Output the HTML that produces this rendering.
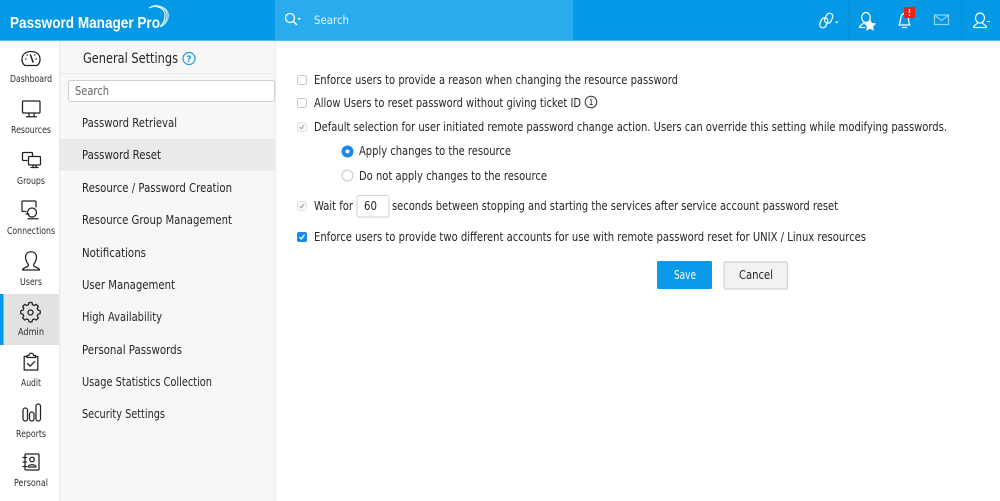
<!DOCTYPE html>
<html><head><meta charset="utf-8"><style>
html,body{margin:0;padding:0;background:#fff}
svg{display:block}
text{font-family:"DejaVu Sans","Liberation Sans",sans-serif;fill:#262626}
.m{font-size:12px}
.s{font-size:9.8px;fill:#2e2e2e}
.c{font-size:12px}
.i{fill:none;stroke:#222;stroke-width:1.25;stroke-linejoin:round;stroke-linecap:round}
.w{fill:none;stroke:#fff;stroke-width:1.2;stroke-linecap:round;stroke-linejoin:round}
</style></head><body>
<svg width="1000" height="501" viewBox="0 0 1000 501" xmlns="http://www.w3.org/2000/svg">
<rect width="1000" height="501" fill="#fff"/>
<rect x="59" y="40" width="216" height="461" fill="#f7f7f7"/>
<rect x="59" y="40" width="1" height="461" fill="#eaeaea"/>
<rect x="275" y="40" width="1" height="461" fill="#ececec"/>
<rect x="60" y="73" width="215" height="1.2" fill="#ececec"/>
<rect width="1000" height="40" fill="#0498e6"/>
<rect y="40" width="1000" height="1" fill="#56bdf0"/>
<rect x="275" width="298" height="40" fill="#2aabee"/>

<!-- Logo -->
<text x="10" y="28" font-size="15.500" font-weight="700" style="fill:#fff;font-family:'Liberation Sans',sans-serif" textLength="150" lengthAdjust="spacingAndGlyphs">Password Manager Pro</text>
<path d="M149 8C156 4.500 164 8 165 14C165.500 19 163 24 160 26.500" fill="none" stroke="#fff" stroke-width="1"/>
<path d="M151 6.500C158 4.500 166 8 167 14C167.500 19 164.500 24 161 27" fill="none" stroke="#e6f6ff" stroke-width="1"/>
<path d="M154 5.500C161 5 168 9 168.500 15C168.500 19 166 23 163 25.500" fill="none" stroke="#bfe7fb" stroke-width=".9"/>

<!-- Search -->
<circle cx="290" cy="18" r="4.500" fill="none" stroke="#fff" stroke-width="1.300"/>
<path d="M293.500 21.500L297 25" stroke="#fff" stroke-width="1.500"/>
<path d="M297.500 18h3.500l-1.750 2z" fill="#fff"/>
<text x="314" y="24" font-size="11.500" style="fill:#e4f5fe" textLength="35" lengthAdjust="spacingAndGlyphs">Search</text>

<!-- Header right icons -->
<g class="w">
<rect x="820.500" y="17.500" width="6.500" height="10.500" rx="3.250" transform="rotate(25 823.750 22.750)"/>
<rect x="825.500" y="13" width="6.500" height="10.500" rx="3.250" transform="rotate(25 828.750 18.250)"/>
<ellipse cx="866" cy="17.500" rx="4.300" ry="5"/>
<path d="M859.500 27.500c0-3 3.500-2.500 4.500-5M859.500 27.500h5M869 22.500l1 .7"/>
<path d="M899 25c2-2 .5-11.500 5.500-11.500S908 23 910 25zM902.500 27.500h4"/>
<ellipse cx="980" cy="18" rx="4.500" ry="5"/>
<path d="M973.500 27.500c0-3 4-3 4.500-5M986.500 27.500c0-3-4-3-4.500-5M973.500 27.500h13"/>
</g>
<path d="M835 21.500h3.500l-1.750 2z" fill="#fff"/>
<path d="M987 21.500h3" stroke="#fff"/>
<path d="M870 19l1.900 3.900 4.300.6-3.100 3 .7 4.300-3.800-2-3.800 2 .7-4.300-3.100-3 4.300-.6z" fill="#fff"/>
<rect x="904" y="7" width="11" height="11" rx="1.500" fill="#e8241c"/>
<path d="M909.500 9v4M909.500 14.500v1.500" stroke="#fff" stroke-width="1.300"/>
<rect x="934.500" y="15" width="14" height="9.500" fill="none" stroke="#8fd3f6" stroke-width="1.200"/>
<path d="M935 15.500l6.500 5 6.500-5" fill="none" stroke="#8fd3f6" stroke-width="1.200"/>
<g stroke="#0a8cd2" stroke-width="1" opacity=".6">
<path d="M848.500 0v40"/><path d="M961.500 0v40"/>
</g>

<!-- Left nav -->
<rect x="0" y="294" width="59" height="51" fill="#e2e2e2"/>
<rect x="0" y="294" width="3.500" height="51" fill="#0498e6"/>

<g class="i">
<path d="M25 65.500c-5-3-4.500-14 6-14s11 11 6 14z"/>
<path d="M30.500 55l2.500 7" stroke-width="1.500"/>
<path d="M25.500 59h.5M36.500 59h-.5M27 54.800l.3.3M35 54.800l-.3.3"/>
<rect x="22.500" y="101" width="17.500" height="12" rx="1"/>
<path d="M26.500 116.800h10M29 113v3.500M34 113v3.500"/>
<path d="M27 160.500h-3.500a1 1 0 0 1-1-1v-6a1 1 0 0 1 1-1h8a1 1 0 0 1 1 1v3"/>
<rect x="28.500" y="156.500" width="12" height="8.500" rx="1"/>
<path d="M31 167.500h7M33 165v2.500M36 165v2.500"/>
<path d="M26 211.500h-3a1 1 0 0 1-1-1v-8.500a1 1 0 0 1 1-1h12a1 1 0 0 1 1 1v5"/>
<circle cx="32" cy="212.500" r="4.500" fill="#fff"/>
<path d="M28 218.800h10M26 214h3"/>
<path d="M25.500 257c0-7 11-7 11 0 0 3-1.500 5.500-2.500 7-1 1.500 0 2.500 1.500 3 2 .8 4 1.500 4 3h-17c0-1.500 2-2.200 4-3 1.500-.5 2.500-1.500 1.500-3-1-1.500-2.500-4-2.500-7z"/>
<path d="M29 302.500h3l.5 2.200 1.800.8 1.900-1.200 2.200 2.200-1.200 1.900.8 1.800 2.200.5v3l-2.200.5-.8 1.800 1.200 1.900-2.200 2.200-1.900-1.200-1.800.8-.5 2.200h-3l-.5-2.200-1.800-.8-1.900 1.200-2.200-2.200 1.200-1.900-.8-1.800-2.200-.5v-3l2.200-.5.8-1.800-1.200-1.900 2.200-2.200 1.900 1.200 1.800-.8z"/>
<circle cx="30.500" cy="312.500" r="2.500"/>
<path d="M26 356.500h-1.800v13.500h13.600v-13.500H36"/>
<path d="M27 357.500v-2h2c0-3 4.500-3 4.500 0h2v2z"/>
<path d="M27.500 363.500l2.700 2.700 4.500-4.700"/>
<rect x="23" y="408" width="4.500" height="13" rx="2.200"/>
<rect x="29.500" y="412" width="4.500" height="9" rx="2.200"/>
<rect x="36" y="404" width="4.500" height="17" rx="2.200"/>
<rect x="25" y="454" width="14" height="16" rx="1"/>
<path d="M23 457.500h3.500M23 462h3.500M23 466.500h3.500"/>
<circle cx="32" cy="459.500" r="2.300"/>
<path d="M28 467c0-3 8-3 8 0z"/>
</g>
<text class="s" x="10" y="82" textLength="42" lengthAdjust="spacingAndGlyphs">Dashboard</text>
<text class="s" x="11" y="133" textLength="40" lengthAdjust="spacingAndGlyphs">Resources</text>
<text class="s" x="17" y="184" textLength="28" lengthAdjust="spacingAndGlyphs">Groups</text>
<text class="s" x="7" y="234" textLength="48" lengthAdjust="spacingAndGlyphs">Connections</text>
<text class="s" x="20" y="285" textLength="22" lengthAdjust="spacingAndGlyphs">Users</text>
<text class="s" x="18" y="335" textLength="26" lengthAdjust="spacingAndGlyphs">Admin</text>
<text class="s" x="21" y="386" textLength="20" lengthAdjust="spacingAndGlyphs">Audit</text>
<text class="s" x="16" y="437" textLength="30" lengthAdjust="spacingAndGlyphs">Reports</text>
<text class="s" x="14" y="486" textLength="34" lengthAdjust="spacingAndGlyphs">Personal</text>

<!-- Second panel -->
<text x="83" y="63" font-size="14.500" textLength="95" lengthAdjust="spacingAndGlyphs">General Settings</text>
<circle cx="189" cy="58.500" r="6" fill="none" stroke="#1c9be2" stroke-width="1.200"/>
<text x="186.300" y="62" font-size="9" font-weight="700" style="fill:#1c9be2">?</text>
<rect x="68.500" y="80.500" width="206" height="21" rx="2" fill="#fff" stroke="#cfcfcf"/>
<text x="75" y="95" font-size="12" style="fill:#666" textLength="34" lengthAdjust="spacingAndGlyphs">Search</text>
<rect x="60" y="139" width="215" height="32" fill="#eaeaea"/>
<text class="m" x="82" y="127" textLength="95" lengthAdjust="spacingAndGlyphs">Password Retrieval</text>
<text class="m" x="82" y="159" textLength="79" lengthAdjust="spacingAndGlyphs">Password Reset</text>
<text class="m" x="82" y="192" textLength="150" lengthAdjust="spacingAndGlyphs">Resource / Password Creation</text>
<text class="m" x="82" y="224" textLength="150" lengthAdjust="spacingAndGlyphs">Resource Group Management</text>
<text class="m" x="82" y="257" textLength="64" lengthAdjust="spacingAndGlyphs">Notifications</text>
<text class="m" x="82" y="289" textLength="93" lengthAdjust="spacingAndGlyphs">User Management</text>
<text class="m" x="82" y="321" textLength="80" lengthAdjust="spacingAndGlyphs">High Availability</text>
<text class="m" x="82" y="354" textLength="100" lengthAdjust="spacingAndGlyphs">Personal Passwords</text>
<text class="m" x="82" y="386" textLength="130" lengthAdjust="spacingAndGlyphs">Usage Statistics Collection</text>
<text class="m" x="82" y="418" textLength="83" lengthAdjust="spacingAndGlyphs">Security Settings</text>

<!-- Content -->
<rect x="297.500" y="75.500" width="9" height="9" rx="2" fill="#fff" stroke="#c8c8c8"/>
<rect x="297.500" y="98.500" width="9" height="9" rx="2" fill="#fff" stroke="#c8c8c8"/>
<rect x="297.500" y="122.500" width="9" height="9" rx="2" fill="#fafafa" stroke="#e2e2e2"/>
<path d="M299.800 127l1.500 1.800 3-4" fill="none" stroke="#999"/>
<rect x="297.500" y="201.500" width="9" height="9" rx="2" fill="#fafafa" stroke="#e2e2e2"/>
<path d="M299.800 206l1.500 1.800 3-4" fill="none" stroke="#999"/>
<rect x="297" y="232" width="10" height="10" rx="2" fill="#1b87f0"/>
<path d="M299.500 237l1.800 2 3.200-4.500" fill="none" stroke="#fff" stroke-width="1.300"/>
<circle cx="347.500" cy="151.500" r="6" fill="#1b87f0"/>
<circle cx="347.500" cy="151.500" r="2" fill="#fff"/>
<circle cx="347.500" cy="175.500" r="5.500" fill="#fff" stroke="#c8c8c8"/>

<text class="c" x="314" y="84" textLength="364" lengthAdjust="spacingAndGlyphs">Enforce users to provide a reason when changing the resource password</text>
<text class="c" x="314" y="107" textLength="267" lengthAdjust="spacingAndGlyphs">Allow Users to reset password without giving ticket ID</text>
<circle cx="591" cy="102" r="5.800" fill="none" stroke="#333" stroke-width="1"/>
<path d="M590 100h1.200v4.500M589.800 104.500h2.800M591 97.800v.8" fill="none" stroke="#333" stroke-width=".9"/>
<text class="c" x="314" y="131" textLength="633" lengthAdjust="spacingAndGlyphs">Default selection for user initiated remote password change action. Users can override this setting while modifying passwords.</text>
<text class="c" x="359" y="155" textLength="152" lengthAdjust="spacingAndGlyphs">Apply changes to the resource</text>
<text class="c" x="359" y="180" textLength="188" lengthAdjust="spacingAndGlyphs">Do not apply changes to the resource</text>
<text class="c" x="314" y="210" textLength="39" lengthAdjust="spacingAndGlyphs">Wait for</text>
<rect x="357" y="195.500" width="32" height="21.500" rx="2" fill="#fff" stroke="#d0d0d0"/>
<text class="c" x="364" y="210" textLength="13" lengthAdjust="spacingAndGlyphs">60</text>
<text class="c" x="392" y="210" textLength="446" lengthAdjust="spacingAndGlyphs">seconds between stopping and starting the services after service account password reset</text>
<text class="c" x="314" y="241" textLength="552" lengthAdjust="spacingAndGlyphs">Enforce users to provide two different accounts for use with remote password reset for UNIX / Linux resources</text>

<rect x="657" y="261" width="55" height="28" rx="1.500" fill="#0a98e8"/>
<text x="674" y="279" font-size="12" style="fill:#fff" textLength="22" lengthAdjust="spacingAndGlyphs">Save</text>
<rect x="724" y="262" width="63.500" height="27" rx="1.500" fill="#f1f3f3" stroke="#d2d2d2" stroke-width="1.200"/>
<text x="739" y="279" font-size="12" textLength="34" lengthAdjust="spacingAndGlyphs">Cancel</text>
</svg>
</body></html>
